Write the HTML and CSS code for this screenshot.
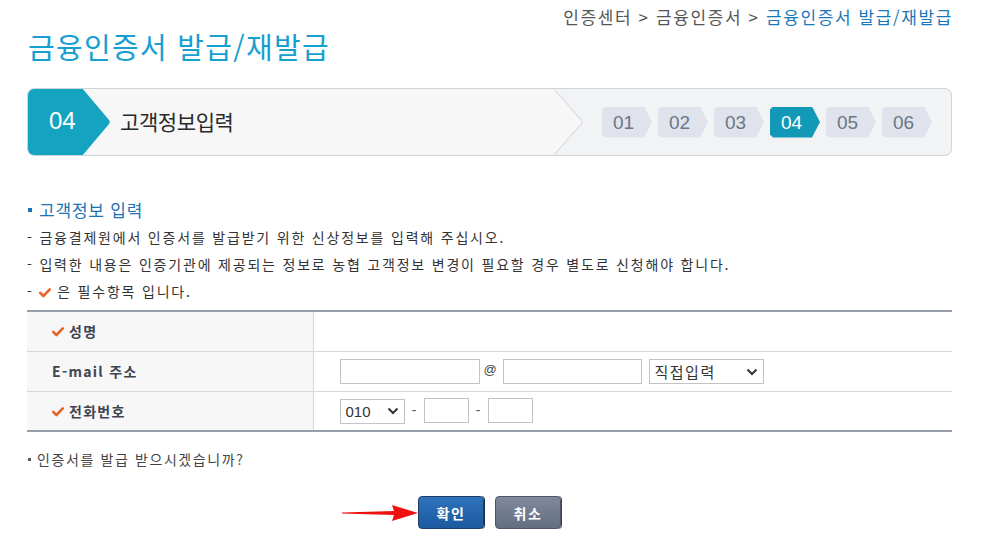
FILE: index.html
```html
<!DOCTYPE html>
<html lang="ko">
<head>
<meta charset="utf-8">
<title>금융인증서 발급/재발급</title>
<link rel="stylesheet" href="styles.css">
</head>
<body>
<div class="page">
  <div class="breadcrumb">인증센터 &gt; 금융인증서 &gt; <span class="current">금융인증서 발급/재발급</span></div>
  <h1 class="title">금융인증서 발급/재발급</h1>

  <div class="stepbox">
    <div class="step-left">
      <div class="step-badge">
        <svg class="badge-shape" width="84" height="68" viewBox="0 0 84 68"><path d="M7,0 H55 L82,32 Q83.5,34 82,36 L55,68 H7 Q0,68 0,61 V7 Q0,0 7,0 Z" fill="#15a3c2"/></svg>
        <span class="badge-num">04</span>
      </div>
      <div class="step-title">고객정보입력</div>
    </div>
    <svg class="step-divider" width="30" height="66" viewBox="0 0 30 66"><path d="M0,0 L28,32 Q29,33 28,34 L0,66 Z" fill="#f7f7f7"/><path d="M0,0 L28,32 Q29,33 28,34 L0,66" fill="none" stroke="#dcdfe4" stroke-width="1.2"/></svg>
    <div class="chips">
      <span class="chip">01</span>
      <span class="chip">02</span>
      <span class="chip">03</span>
      <span class="chip active">04</span>
      <span class="chip">05</span>
      <span class="chip">06</span>
    </div>
  </div>

  <h2 class="section-title"><span class="sq"></span>고객정보 입력</h2>
  <ul class="notes">
    <li>- 금융결제원에서 인증서를 발급받기 위한 신상정보를 입력해 주십시오.</li>
    <li>- 입력한 내용은 인증기관에 제공되는 정보로 농협 고객정보 변경이 필요할 경우 별도로 신청해야 합니다.</li>
    <li>- <svg class="chk" width="12" height="10" viewBox="0 0 12 10"><path d="M1.2,4.8 L4.4,8 L10.8,1.4" fill="none" stroke="#e8622e" stroke-width="2.6" stroke-linecap="round" stroke-linejoin="round"/></svg> 은 필수항목 입니다.</li>
  </ul>

  <table class="form">
    <tr>
      <th><svg class="chk" width="12" height="10" viewBox="0 0 12 10"><path d="M1.2,4.8 L4.4,8 L10.8,1.4" fill="none" stroke="#e8622e" stroke-width="2.6" stroke-linecap="round" stroke-linejoin="round"/></svg>성명</th>
      <td></td>
    </tr>
    <tr>
      <th class="plain">E-mail 주소</th>
      <td>
        <div class="fields">
          <input class="inp w140" type="text">
          <span class="at">@</span>
          <input class="inp w139" type="text">
          <div class="sel w115"><select><option>직접입력</option></select><svg class="caret" width="12" height="8" viewBox="0 0 12 8"><path d="M1.5,1.5 L6,6 L10.5,1.5" fill="none" stroke="#333" stroke-width="2"/></svg></div>
        </div>
      </td>
    </tr>
    <tr>
      <th><svg class="chk" width="12" height="10" viewBox="0 0 12 10"><path d="M1.2,4.8 L4.4,8 L10.8,1.4" fill="none" stroke="#e8622e" stroke-width="2.6" stroke-linecap="round" stroke-linejoin="round"/></svg>전화번호</th>
      <td>
        <div class="fields">
          <div class="sel w65"><select class="num"><option>010</option></select><svg class="caret" width="12" height="8" viewBox="0 0 12 8"><path d="M1.5,1.5 L6,6 L10.5,1.5" fill="none" stroke="#333" stroke-width="2"/></svg></div>
          <span class="dash">-</span>
          <input class="inp w45" type="text">
          <span class="dash">-</span>
          <input class="inp w45" type="text">
        </div>
      </td>
    </tr>
  </table>

  <p class="question"><span class="sq gray"></span>인증서를 발급 받으시겠습니까?</p>

  <div class="buttons">
    <svg class="arrow" width="78" height="20" viewBox="0 0 78 20"><path d="M0,9.5 L52,8 L50,2 L76,10 L50,18 L52,12 L0,10.5 Z" fill="#ee1111"/></svg>
    <button class="btn ok">확인</button>
    <button class="btn cancel">취소</button>
  </div>
</div>
</body>
</html>
```

FILE: styles.css
```css
* { box-sizing: border-box; }
html, body { margin: 0; padding: 0; background: #fff; }
body {
  font-family: "Noto Sans CJK KR", "Noto Sans", sans-serif;
  color: #333;
}
.page {
  width: 987px;
  padding: 0 35px 0 27px;
}
.breadcrumb {
  text-align: right;
  font-size: 17px;
  line-height: 26px;
  padding-top: 4px;
  color: #555;
  letter-spacing: 1.6px;
  margin-right: -1px;
}
.breadcrumb .current { color: #1b78b8; }
.title {
  margin: 0 0 0 1px;
  height: 58px;
  font-size: 29px;
  line-height: 32px;
  font-weight: 400;
  color: #179fd0;
  letter-spacing: 1.3px;
}
.stepbox {
  height: 68px;
  border: 1px solid #cfd4da;
  border-radius: 7px;
  background: #f2f3f5;
  display: flex;
  align-items: stretch;
  overflow: hidden;
}
.step-left {
  flex: 1;
  display: flex;
  align-items: center;
  background: #f7f7f7;
}
.step-badge {
  position: relative;
  width: 84px;
  height: 68px;
  margin: -1px 0 -1px -1px;
  flex: none;
}
.badge-shape { display: block; }
.badge-num {
  position: absolute;
  left: 22px;
  top: 0;
  line-height: 66px;
  font-family: "Liberation Sans", Arial, sans-serif;
  font-size: 24px;
  color: #fff;
}
.step-title {
  padding-left: 9px;
  font-size: 21px;
  letter-spacing: -0.4px;
  color: #2a2a2a;
  padding-bottom: 2px;
}
.step-divider { display: block; flex: none; }
.chips {
  display: flex;
  align-items: center;
  gap: 6px;
  padding: 0 19px 0 18px;
}
.chip {
  width: 50px;
  height: 31px;
  line-height: 31px;
  padding-right: 7px;
  text-align: center;
  background: #e0e3eb;
  color: #6b7688;
  font-family: "Liberation Sans", Arial, sans-serif;
  font-size: 19px;
  clip-path: polygon(3px 0, 42px 0, 50px 50%, 42px 100%, 3px 100%, 0 calc(100% - 3px), 0 3px);
}
.chip.active {
  background: #1399b8;
  color: #fff;
}
.section-title {
  margin: 42px 0 0 1px;
  font-size: 17px;
  line-height: 24px;
  font-weight: 400;
  color: #1b73b8;
  letter-spacing: 0.8px;
  display: flex;
  align-items: center;
}
.sq {
  display: inline-block;
  width: 4px;
  height: 4px;
  background: #1b73b8;
  margin-right: 7px;
  flex: none;
}
.sq.gray { background: #555; width: 3px; height: 3px; margin-right: 6px; }
.notes {
  list-style: none;
  margin: 2px 0 0;
  padding: 0;
  font-size: 14px;
  line-height: 27px;
  letter-spacing: 1.8px;
  color: #333;
}
.chk { display: inline-block; vertical-align: -1px; }
.form {
  margin-top: 5px;
  width: 100%;
  border-collapse: collapse;
  border-top: 2px solid #959eaa;
  border-bottom: 2px solid #959eaa;
}
.form th, .form td {
  height: 40px;
  border-bottom: 1px solid #d3d8de;
  padding: 0;
}
.form th {
  width: 286px;
  background: #f7f7f7;
  border-right: 1px solid #d3d8de;
  text-align: left;
  padding-left: 25px;
  font-size: 14px;
  font-weight: 700;
  color: #3d4452;
  letter-spacing: 1.3px;
}
.form th .chk { margin-right: 5px; vertical-align: 0; }
.form td { padding-left: 26px; }
.fields {
  display: flex;
  align-items: center;
}
.inp {
  height: 25px;
  border: 1px solid #c3c3c3;
  background: #fff;
  padding: 0 4px;
  font-size: 13px;
  outline: none;
}
.w140 { width: 140px; }
.w139 { width: 139px; }
.w45 { width: 45px; }
.w65 { width: 65px; }
.w115 { width: 115px; }
.at {
  width: 23px;
  text-align: center;
  font-family: "Liberation Sans", Arial, sans-serif;
  font-size: 13px;
  color: #444;
  padding-right: 2px;
  padding-bottom: 3px;
}
.w139 + .sel { margin-left: 7px; }
.dash {
  width: 19px;
  text-align: center;
  font-family: "Liberation Sans", Arial, sans-serif;
  font-size: 14px;
  color: #555;
  padding-bottom: 2px;
}
.sel {
  position: relative;
  height: 25px;
}
.sel select {
  appearance: none;
  -webkit-appearance: none;
  width: 100%;
  height: 25px;
  border: 1px solid #c3c3c3;
  border-radius: 0;
  background: #fff;
  padding: 0 0 0 5px;
  font-family: "Noto Sans CJK KR", sans-serif;
  font-size: 15px;
  letter-spacing: 1.5px;
  color: #333;
  outline: none;
}
.sel select.num {
  font-family: "Liberation Sans", Arial, sans-serif;
  font-size: 15px;
  letter-spacing: 0;
}
.caret {
  position: absolute;
  right: 6px;
  top: 9px;
  pointer-events: none;
}
.question {
  margin: 17px 0 0 1px;
  font-size: 14px;
  line-height: 20px;
  letter-spacing: 1.6px;
  color: #444;
  display: flex;
  align-items: center;
}
.buttons {
  position: relative;
  display: flex;
  justify-content: center;
  gap: 11px;
  margin-top: 27px;
}
.arrow {
  position: absolute;
  left: 315px;
  top: 7px;
}
.btn {
  width: 66px;
  height: 33px;
  border-radius: 4px;
  font-family: "Noto Sans CJK KR", sans-serif;
  font-size: 14px;
  font-weight: 700;
  color: #fff;
  letter-spacing: 1.5px;
  padding: 0;
  cursor: pointer;
}
.btn.ok {
  background: linear-gradient(#2f72bb, #1c5aa0);
  border: 1px solid #1d3e68;
  box-shadow: 1px 0 0 #1a2f4d;
}
.btn.cancel {
  background: linear-gradient(#818a9c, #646e82);
  border: 1px solid #4e5666;
  box-shadow: 1px 0 0 #3a404c;
}
```
